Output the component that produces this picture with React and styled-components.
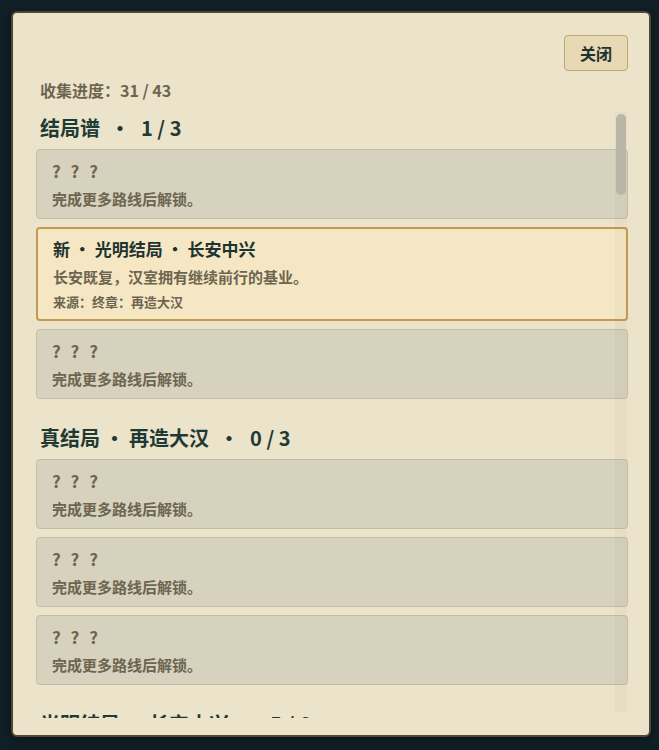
import React, { useEffect, useRef, useState } from 'react';
import styled, { createGlobalStyle } from 'styled-components';

const GlobalStyle = createGlobalStyle`
  html, body {
    margin: 0;
    padding: 0;
    background: #0f1f25;
  }
  body {
    font-family: "Noto Sans CJK SC", "Noto Sans", sans-serif;
  }
`;

const Page = styled.div`
  width: 659px;
  height: 750px;
  padding: 11px 0 0 11px;
  box-sizing: border-box;
`;

const Panel = styled.div`
  width: 640px;
  box-sizing: border-box;
  background: #ece3cb;
  border: 2px solid #4f4834;
  border-radius: 6px;
  padding: 22px 21px 17px 23px;
  display: flex;
  flex-direction: column;
  box-shadow: 0 2px 6px rgba(0, 0, 0, 0.4);
`;

const Header = styled.div`
  display: flex;
  justify-content: flex-end;
`;

const CloseButton = styled.button`
  width: 64px;
  height: 36px;
  background: #e7d9b3;
  border: 1px solid #bea776;
  border-radius: 4px;
  font-family: inherit;
  font-size: 16px;
  font-weight: 700;
  color: #1f3330;
  cursor: pointer;
  padding: 0;
`;

const Progress = styled.div`
  margin-top: 8px;
  padding-left: 4px;
  font-size: 16px;
  line-height: 22px;
  font-weight: 700;
  color: #6e6450;
`;

const ScrollWrap = styled.div`
  position: relative;
  margin-top: 11px;
  height: 606px;
`;

const ScrollArea = styled.div`
  height: 100%;
  overflow-y: auto;
  scrollbar-width: none;
  &::-webkit-scrollbar {
    display: none;
  }
`;

const Track = styled.div`
  position: absolute;
  top: 0;
  bottom: 6px;
  right: 1px;
  width: 12px;
  background: rgba(120, 110, 80, 0.05);
  pointer-events: none;
`;

const Thumb = styled.div`
  position: absolute;
  left: 1px;
  right: 1px;
  border-radius: 5px;
  background: #b9b6a7;
`;

const Section = styled.section`
  padding-top: 4px;
  & + & {
    padding-top: 27px;
  }
`;

const SectionTitle = styled.h2`
  margin: 0 0 9px;
  padding-left: 4px;
  font-size: 20px;
  line-height: 24px;
  font-weight: 700;
  color: #1f3a34;
`;

const Sep = styled.span`
  margin: 0 11px 0 10px;
`;

const List = styled.div`
  display: flex;
  flex-direction: column;
  gap: 8px;
`;

const Card = styled.div`
  box-sizing: border-box;
  border-radius: 4px;
  padding: ${(p) => (p.$unlocked ? '9px 15px 8px' : '10px 15px 9px')};
  background: ${(p) => (p.$unlocked ? '#f5e7c3' : '#d6d2be')};
  border: ${(p) => (p.$unlocked ? '2px solid #c39a4f' : '1px solid #c4bca4')};
`;

const CardTitle = styled.div`
  font-size: 17px;
  line-height: 22px;
  font-weight: 700;
  letter-spacing: ${(p) => (p.$hidden ? '3px' : '0')};
  color: ${(p) => (p.$hidden ? '#6d6550' : '#1f3330')};
`;

const CardDesc = styled.div`
  margin-top: 7px;
  font-size: 15px;
  line-height: 20px;
  font-weight: 700;
  color: #6d6550;
`;

const CardSource = styled.div`
  margin-top: 6px;
  font-size: 13px;
  line-height: 18px;
  font-weight: 700;
  color: #6d6550;
`;

// null = locked
const sections = [
  {
    name: '结局谱',
    items: [
      null,
      ['新 · 光明结局 · 长安中兴', '长安既复，汉室拥有继续前行的基业。', '终章：再造大汉'],
      null,
    ],
  },
  { name: '真结局 · 再造大汉', items: [null, null, null] },
  {
    name: '光明结局 · 长安中兴',
    items: [
      ['光明结局 · 长安中兴', '长安既复，汉室拥有继续前行的基业。', '终章：再造大汉'],
      ['光明结局 · 还于旧都', '天子东归洛阳，百官重整朝纲。', '第九章：东归'],
      ['光明结局 · 四海归心', '诸侯纷纷奉表，天下渐复安宁。', '第十章：会盟'],
      null,
      ['光明结局 · 贤臣辅政', '朝中贤能并进，政令通达四方。', '第八章：求贤'],
      ['光明结局 · 民安其业', '田亩重耕，百姓终得休养生息。', '第七章：屯田'],
    ],
  },
  {
    name: '霸业结局 · 三分天下',
    items: [
      ['霸业结局 · 鼎足而立', '三家各据一方，天下暂成僵局。', '第六章：赤壁'],
      ['霸业结局 · 北定中原', '铁骑横扫河北，中原尽入掌中。', '第五章：官渡'],
      ['霸业结局 · 江东称雄', '据长江之险，坐拥江东六郡。', '第六章：赤壁'],
      null,
      ['霸业结局 · 西取巴蜀', '入川定蜀，以天府之国为根基。', '第七章：入蜀'],
      ['霸业结局 · 挟令诸侯', '奉天子以令不臣，威震四方。', '第四章：迎驾'],
      ['霸业结局 · 一统江山', '四海归一，新朝由此而立。', '终章：天下'],
    ],
  },
  {
    name: '隐逸结局 · 归隐山林',
    items: [
      ['隐逸结局 · 归隐山林', '弃官归田，于山水间了此余生。', '第三章：辞官'],
      ['隐逸结局 · 草庐高卧', '隐于隆中，静待天下之变。', '第二章：草庐'],
      null,
      ['隐逸结局 · 泛舟五湖', '功成身退，一叶扁舟远去。', '第九章：功成'],
      ['隐逸结局 · 著书立说', '闭门著述，留文章于后世。', '第八章：治学'],
      ['隐逸结局 · 医者仁心', '行医乡里，救死扶伤不问名利。', '第四章：疫病'],
    ],
  },
  {
    name: '悲剧结局 · 社稷倾覆',
    items: [
      ['悲剧结局 · 社稷倾覆', '宗庙焚毁，汉室就此终结。', '第五章：兵变'],
      ['悲剧结局 · 孤城陷落', '援军未至，孤城终被攻破。', '第六章：坚守'],
      ['悲剧结局 · 忠魂不归', '力战而死，英名长留青史。', '第七章：死战'],
      null,
      ['悲剧结局 · 众叛亲离', '部将离心，大业功亏一篑。', '第八章：内乱'],
      ['悲剧结局 · 权臣篡位', '朝政旁落，天子沦为傀儡。', '第四章：宫变'],
      ['悲剧结局 · 烽火连天', '战乱不休，百姓流离失所。', '第三章：乱世'],
    ],
  },
  {
    name: '奇遇结局 · 江湖传说',
    items: [
      ['奇遇结局 · 江湖传说', '仗剑天涯，留下无数传说。', '第二章：游侠'],
      ['奇遇结局 · 海外仙山', '东渡大海，寻得世外桃源。', '第九章：出海'],
      null,
      ['奇遇结局 · 神兵出世', '得授宝剑，自此名动天下。', '第五章：古墓'],
      ['奇遇结局 · 天书残卷', '偶得天书，窥见天机一角。', '第六章：奇书'],
    ],
  },
  {
    name: '隐藏结局 · 天命所归',
    items: [
      ['隐藏结局 · 天命所归', '天意所向，众望所归。', '终章：天命'],
      null,
      ['隐藏结局 · 星落五丈', '将星陨落，壮志未酬身先死。', '第十章：北伐'],
      ['隐藏结局 · 桃园重聚', '兄弟三人再聚桃园，共饮一杯。', '终章：桃园'],
      null,
      ['隐藏结局 · 一梦千年', '醒来方知，一切不过大梦一场。', '终章：梦醒'],
    ],
  },
];

const unlockedCount = (items) => items.filter(Boolean).length;

function EndingCard({ item }) {
  if (!item) {
    return (
      <Card>
        <CardTitle $hidden>? ? ?</CardTitle>
        <CardDesc>完成更多路线后解锁。</CardDesc>
      </Card>
    );
  }
  const [title, desc, source] = item;
  return (
    <Card $unlocked>
      <CardTitle>{title}</CardTitle>
      <CardDesc>{desc}</CardDesc>
      <CardSource>来源：{source}</CardSource>
    </Card>
  );
}

export default function App() {
  const scrollRef = useRef(null);
  const [thumb, setThumb] = useState({ top: 2, height: 82 });

  const updateThumb = () => {
    const el = scrollRef.current;
    if (!el) return;
    const trackHeight = el.clientHeight - 6;
    const height = Math.max(30, (el.clientHeight / el.scrollHeight) * trackHeight);
    const maxScroll = el.scrollHeight - el.clientHeight || 1;
    const top = 2 + (el.scrollTop / maxScroll) * (trackHeight - height - 2);
    setThumb({ top, height });
  };

  useEffect(() => {
    updateThumb();
  }, []);

  return (
    <>
      <GlobalStyle />
      <Page>
        <Panel>
          <Header>
            <CloseButton>关闭</CloseButton>
          </Header>
          <Progress>收集进度：31 / 43</Progress>
          <ScrollWrap>
            <ScrollArea ref={scrollRef} onScroll={updateThumb}>
              {sections.map((s) => (
                <Section key={s.name}>
                  <SectionTitle>
                    {s.name}
                    <Sep>·</Sep>
                    {unlockedCount(s.items)} / {s.items.length}
                  </SectionTitle>
                  <List>
                    {s.items.map((item, i) => (
                      <EndingCard key={i} item={item} />
                    ))}
                  </List>
                </Section>
              ))}
            </ScrollArea>
            <Track>
              <Thumb style={{ top: thumb.top, height: thumb.height }} />
            </Track>
          </ScrollWrap>
        </Panel>
      </Page>
    </>
  );
}
